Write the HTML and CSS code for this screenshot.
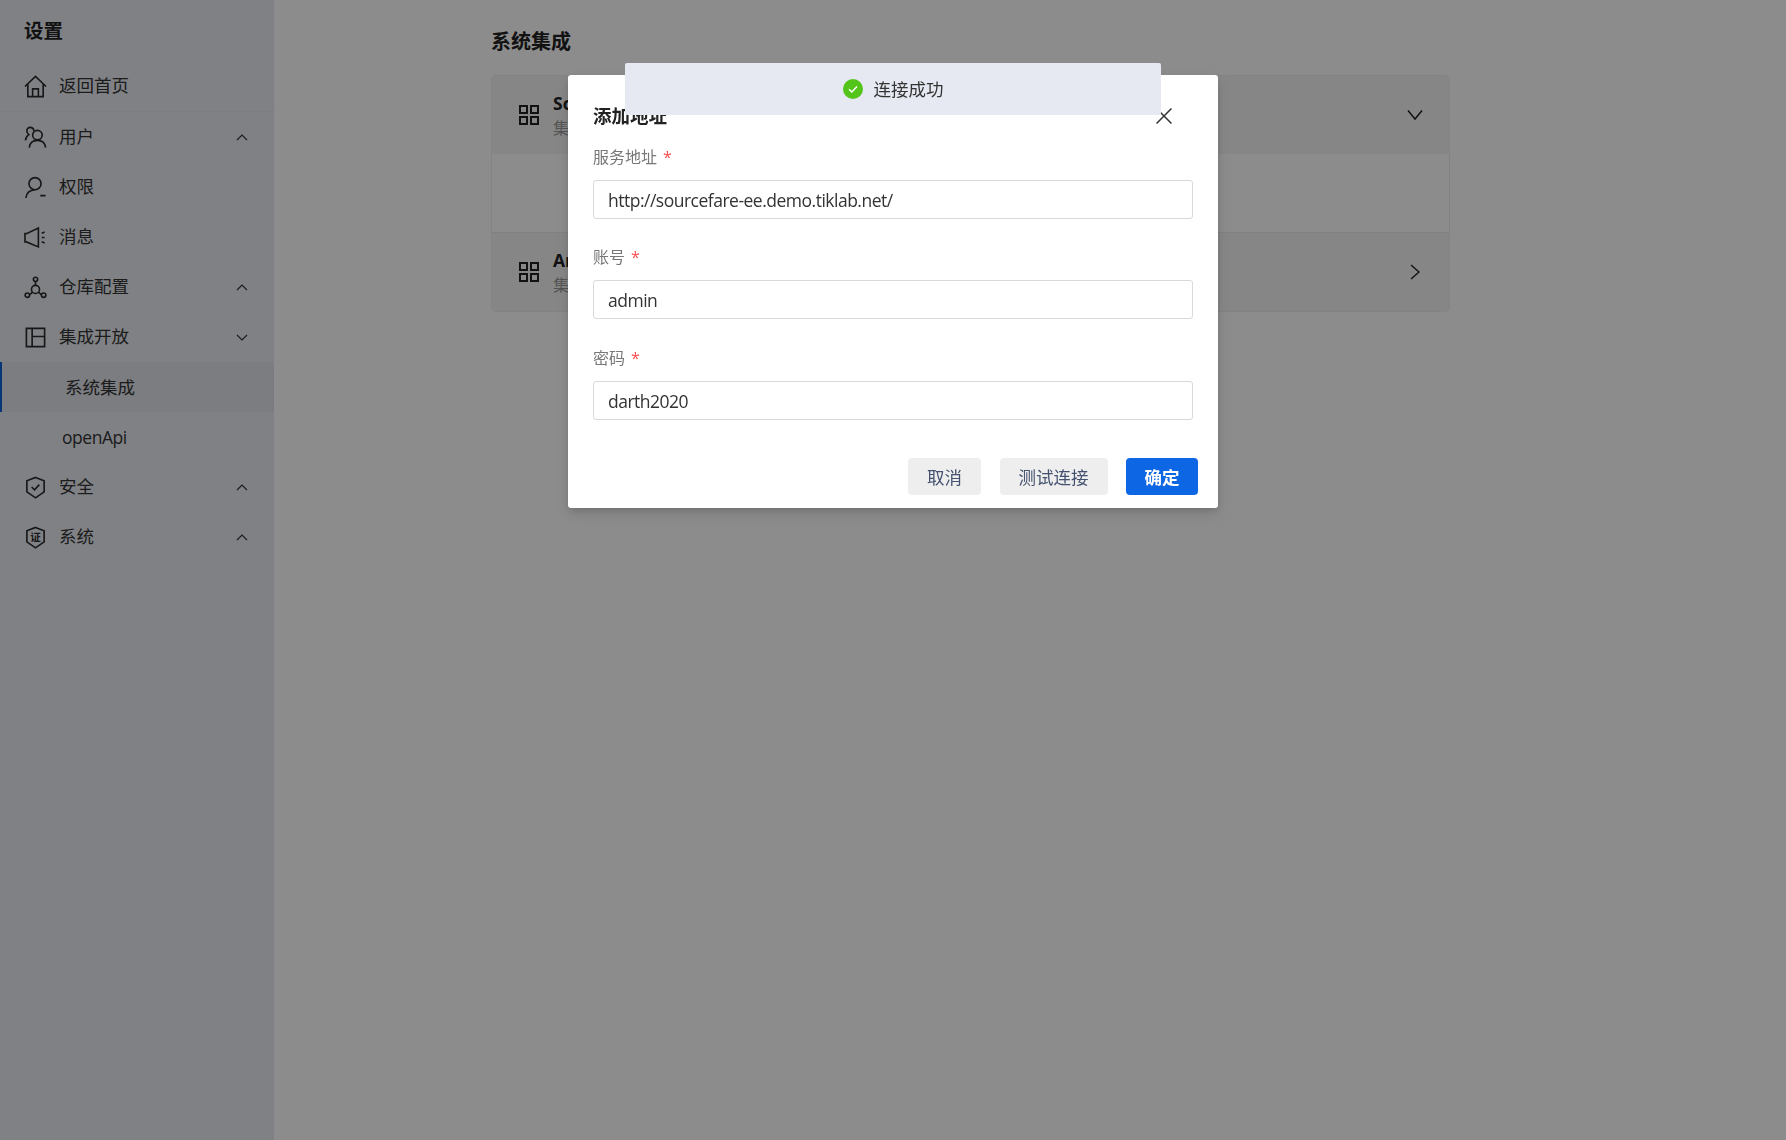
FILE: index.html
```html
<!DOCTYPE html>
<html lang="zh-CN">
<head>
<meta charset="utf-8">
<title>设置</title>
<link rel="stylesheet" href="styles.css">
</head>
<body>
<div class="app">
  <aside class="sidebar">
    <div class="side-title">设置</div>
    <nav class="nav">
      <a class="row row-home">
        <svg class="ico" viewBox="0 0 24 24"><path d="M1 12 12 1.500 23 12M4 9.500V22.500h16V9.500M9 22.500v-8h6v8"/></svg>
        <span class="label">返回首页</span>
      </a>
      <a class="row">
        <svg class="ico" viewBox="0 0 24 24"><circle cx="14" cy="9.500" r="5"/><path d="M5.500 22.500c.5-4.500 3.500-7.500 8.500-7.500s8 3 8.500 7.500M10.500 5C10 2.800 8.500 1.500 6.500 1.500 4.200 1.500 2.800 3.300 3 5.500c.1 1.500.8 2.600 2 3.500C3 10.300 1.800 12.500 1.500 15"/></svg>
        <span class="label">用户</span>
        <svg class="chev" viewBox="0 0 12 7"><path d="M1 6 6 1l5 5"/></svg>
      </a>
      <a class="row">
        <svg class="ico" viewBox="0 0 24 24"><circle cx="11.500" cy="8" r="6.300"/><path d="M2 23c.4-5 3.600-8.300 9.500-8.700M17 20.500h5.500"/></svg>
        <span class="label">权限</span>
      </a>
      <a class="row">
        <svg class="ico" viewBox="0 0 24 24"><path d="M1 8h1.500L15 2.200v19.600L2.500 16.600H1zM18.500 7.500l3-1.200M18.500 12h3M18.500 16.500l3 1.200"/></svg>
        <span class="label">消息</span>
      </a>
      <a class="row">
        <svg class="ico" viewBox="0 0 24 24"><circle cx="12" cy="3.500" r="2.200"/><circle cx="12" cy="14" r="4.200"/><circle cx="3.500" cy="20" r="2.300"/><circle cx="20.500" cy="20" r="2.300"/><path d="M12 5.700v4.100M5.800 19.500l3-2.500M18.200 19.500l-3-2.500"/></svg>
        <span class="label">仓库配置</span>
        <svg class="chev" viewBox="0 0 12 7"><path d="M1 6 6 1l5 5"/></svg>
      </a>
      <a class="row">
        <svg class="ico" viewBox="0 0 24 24"><path d="M2.500 2.500h19v19h-19zM8.500 2.500v19M8.500 11h13"/></svg>
        <span class="label">集成开放</span>
        <svg class="chev" viewBox="0 0 12 7"><path d="M1 1l5 5 5-5"/></svg>
      </a>
      <a class="row sub active"><span class="label">系统集成</span></a>
      <a class="row sub"><span class="label">openApi</span></a>
      <a class="row">
        <svg class="ico" viewBox="0 0 24 24"><path d="M12 1.500 21 5v11.500L12 22.800 3 16.500V5zM8 11.500l3 3 5-5.500"/></svg>
        <span class="label">安全</span>
        <svg class="chev" viewBox="0 0 12 7"><path d="M1 6 6 1l5 5"/></svg>
      </a>
      <a class="row">
        <svg class="ico" viewBox="0 0 24 24"><path d="M12 1.500 21 5v11.500L12 22.800 3 16.500V5z"/><text class="ico-text" x="12" y="16">证</text></svg>
        <span class="label">系统</span>
        <svg class="chev" viewBox="0 0 12 7"><path d="M1 6 6 1l5 5"/></svg>
      </a>
    </nav>
  </aside>

  <main class="main">
    <h1 class="page-title">系统集成</h1>
    <section class="card">
      <div class="card-head">
        <svg class="grid-ico" viewBox="0 0 20 20"><path d="M1 1h7v7H1zM12 1h7v7h-7zM1 12h7v7H1zM12 12h7v7h-7z"/></svg>
        <div class="card-text">
          <div class="card-name">SourceFare</div>
          <div class="card-desc">集成SourceFare代码扫描</div>
        </div>
        <svg class="card-chev" viewBox="0 0 16 12"><path d="M1 1.500 8 10l7-8.500"/></svg>
      </div>
      <div class="card-body"></div>
      <div class="card-head card-head-last">
        <svg class="grid-ico" viewBox="0 0 20 20"><path d="M1 1h7v7H1zM12 1h7v7h-7zM1 12h7v7H1zM12 12h7v7h-7z"/></svg>
        <div class="card-text">
          <div class="card-name">Arbess</div>
          <div class="card-desc">集成Arbess流水线</div>
        </div>
        <svg class="card-chev card-chev-right" viewBox="0 0 10 16"><path d="M1 1l8 7-8 7"/></svg>
      </div>
    </section>
  </main>
</div>

<div class="mask"></div>

<div class="modal">
  <header class="modal-head">
    <h2 class="modal-title">添加地址</h2>
    <svg class="close" viewBox="0 0 16 16"><path d="M.5.500l15 15M15.500.500l-15 15"/></svg>
  </header>
  <form class="form">
    <div class="field">
      <label class="field-label">服务地址<span class="req">*</span></label>
      <input class="input" type="text" value="http://sourcefare-ee.demo.tiklab.net/">
    </div>
    <div class="field field-mid">
      <label class="field-label">账号<span class="req">*</span></label>
      <input class="input" type="text" value="admin">
    </div>
    <div class="field">
      <label class="field-label">密码<span class="req">*</span></label>
      <input class="input" type="text" value="darth2020">
    </div>
  </form>
  <footer class="modal-foot">
    <button class="btn" type="button">取消</button>
    <button class="btn" type="button">测试连接</button>
    <button class="btn btn-primary" type="button">确定</button>
  </footer>
</div>

<div class="toast">
  <svg class="toast-ico" viewBox="0 0 20 20"><circle cx="10" cy="10" r="10"/><path d="M6 10.300 8.800 13 14 7.500"/></svg>
  <span class="toast-text">连接成功</span>
</div>
</body>
</html>
```
FILE: styles.css
```css
* { box-sizing: border-box; }
html, body { margin: 0; height: 100%; overflow: hidden; }
body {
  font-family: "Open Sans", "Noto Sans CJK SC", sans-serif;
  font-size: 17.5px;
  color: #333;
  background: #fff;
}
.app { display: flex; height: 1140px; }

.sidebar { width: 274px; flex: none; background: #e9ebf2; color: #333; }
.side-title { height: 61px; padding: 0 0 2px 24px; display: flex; align-items: center; font-size: 19.500px; font-weight: 700; color: #222; }
.nav { display: flex; flex-direction: column; }
.row { display: flex; align-items: center; height: 50px; padding: 0 26px 0 24px; }
.row-home { height: 51px; border-bottom: 1px solid #e4e6ed; }
.label { line-height: 1; }
.ico { width: 23px; height: 23px; flex: none; margin-right: 12px; fill: none; stroke: #2a2a2a; stroke-width: 1.700; }
.ico-text { font-family: "Noto Sans CJK SC", sans-serif; font-size: 11px; font-weight: 700; text-anchor: middle; fill: #2a2a2a; stroke: none; }
.chev { width: 12px; height: 7px; margin-left: auto; fill: none; stroke: #333; stroke-width: 1.200; }
.sub { padding-left: 62px; padding-top: 2px; letter-spacing: -.45px; }
.active { padding-left: 63px; background: #e1e3ea; border-left: 2px solid #0d63d8; letter-spacing: 0; }

.main { flex: 1; padding-left: 217px; background: #fff; }
.page-title { margin: 0; height: 75px; padding-top: 27px; font-size: 20px; line-height: 30px; font-weight: 700; color: #222; }
.card { width: 959px; height: 237px; border: 1px solid #eee; border-radius: 5px; overflow: hidden; }
.card-head { display: flex; align-items: center; height: 78px; padding: 0 26px 0 27px; background: #f5f5f5; }
.card-head-last { height: 79px; border-top: 1px solid #eaeaea; }
.card-body { height: 78px; }
.grid-ico { width: 20px; height: 20px; flex: none; margin-right: 14px; fill: none; stroke: #222; stroke-width: 2; }
.card-text { flex: 1; }
.card-name { font-size: 17.500px; font-weight: 700; line-height: 24px; color: #222; margin-top: 1px; }
.card-desc { font-size: 16px; line-height: 24px; color: #999; margin-top: 1px; }
.card-chev { width: 16px; height: 12px; flex: none; fill: none; stroke: #222; stroke-width: 1.500; }
.card-chev-right { width: 10px; height: 16px; margin-right: 3px; }

.mask { position: fixed; inset: 0; background: rgba(0, 0, 0, .45); }

.modal {
  position: fixed; top: 75px; left: 568px; width: 650px; height: 433px;
  background: #fff; border-radius: 3px;
  box-shadow: 0 6px 16px rgba(0, 0, 0, .12), 0 3px 6px rgba(0, 0, 0, .1);
}
.modal-head { display: flex; align-items: center; justify-content: space-between; height: 70px; padding: 26px 46px 14px 25px; }
.modal-title { margin: 0; font-size: 18.500px; line-height: 30px; font-weight: 700; color: #222; }
.close { width: 16px; height: 16px; fill: none; stroke: #333; stroke-width: 1.500; }
.form { padding: 0 25px; }
.field { margin-bottom: 26px; }
.field-mid { margin-bottom: 27px; }
.field-label { display: block; height: 24px; margin-bottom: 11px; font-size: 16px; line-height: 24px; color: #777; }
.req { margin-left: 6px; color: #ff4d4f; font-size: 16px; }
.input {
  display: block; width: 100%; height: 39px; padding: 0 14px;
  border: 1px solid #d9d9d9; border-radius: 3px; outline: none;
  font: inherit; letter-spacing: -.5px; color: #333; background: #fff;
}
.modal-foot { display: flex; justify-content: flex-end; gap: 18.500px; margin-top: 38px; padding-right: 20px; }
.btn {
  height: 37px; padding: 0 19px; border: 0; border-radius: 4px;
  font: inherit; font-size: 17.500px; background: #eee; color: #44526f;
}
.btn-primary { padding: 0 18.500px; background: #0d66e4; color: #fff; font-weight: 700; }

.toast {
  position: fixed; top: 63px; left: 625px; width: 536px; height: 52px;
  display: flex; align-items: center; justify-content: center; gap: 11px;
  background: #e6e9f2; border-radius: 2px;
}
.toast-ico { width: 20px; height: 20px; fill: #52c41a; }
.toast-ico path { fill: none; stroke: #fff; stroke-width: 1.500; }
.toast-text { color: #333; padding-bottom: 2px; }
```
